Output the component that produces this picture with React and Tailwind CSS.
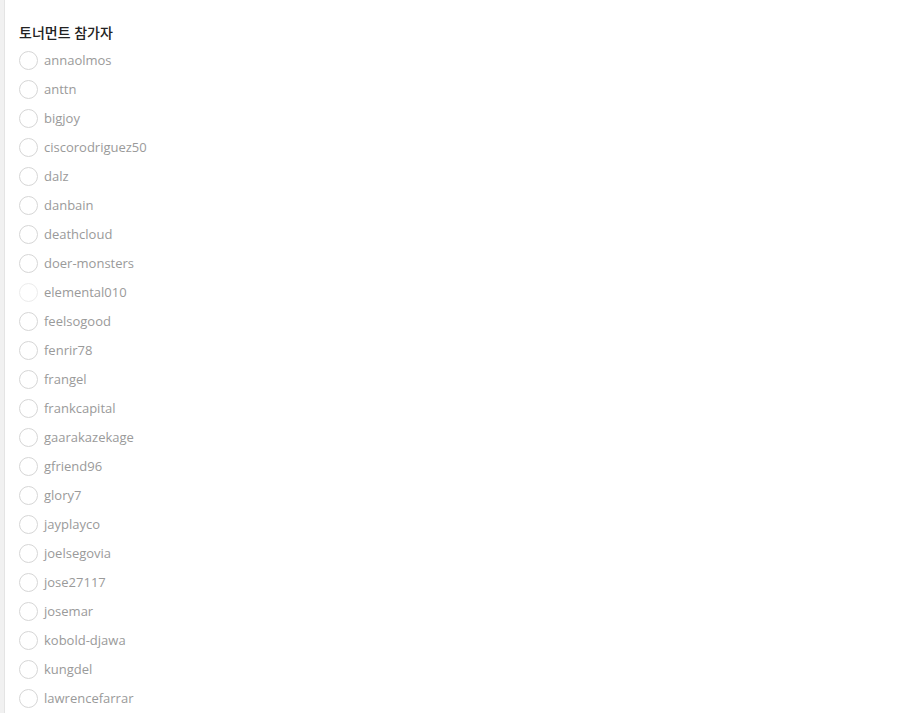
import React from "react";

const players = [
  "annaolmos",
  "anttn",
  "bigjoy",
  "ciscorodriguez50",
  "dalz",
  "danbain",
  "deathcloud",
  "doer-monsters",
  "elemental010",
  "feelsogood",
  "fenrir78",
  "frangel",
  "frankcapital",
  "gaarakazekage",
  "gfriend96",
  "glory7",
  "jayplayco",
  "joelsegovia",
  "jose27117",
  "josemar",
  "kobold-djawa",
  "kungdel",
  "lawrencefarrar",
];

function PlayerRow({ name, faded }) {
  return (
    <label className="flex items-center h-[29px] gap-[6px] cursor-pointer">
      <span
        className={
          "w-[19px] h-[19px] rounded-full border bg-white " +
          (faded ? "border-[#ececec]" : "border-[#d6d6d6]")
        }
      />
      <span className="text-[13px] text-[#9a9a9a]">{name}</span>
    </label>
  );
}

export default function App() {
  return (
    <div
      className="flex min-h-[713px] h-[713px] overflow-hidden bg-white"
      style={{ fontFamily: '"Open Sans", "Noto Sans CJK KR", sans-serif' }}
    >
      <div className="w-[5px] shrink-0 bg-[#f1f1f1] border-r border-[#e4e4e4]" />
      <div className="pl-[14px] pt-[22px]">
        <h3 className="text-[14px] font-medium text-[#222] leading-[22px] mb-[2px]">
          토너먼트 참가자
        </h3>
        <div className="flex flex-col">
          {players.map((p) => (
            <PlayerRow key={p} name={p} faded={p === "elemental010"} />
          ))}
        </div>
      </div>
    </div>
  );
}
